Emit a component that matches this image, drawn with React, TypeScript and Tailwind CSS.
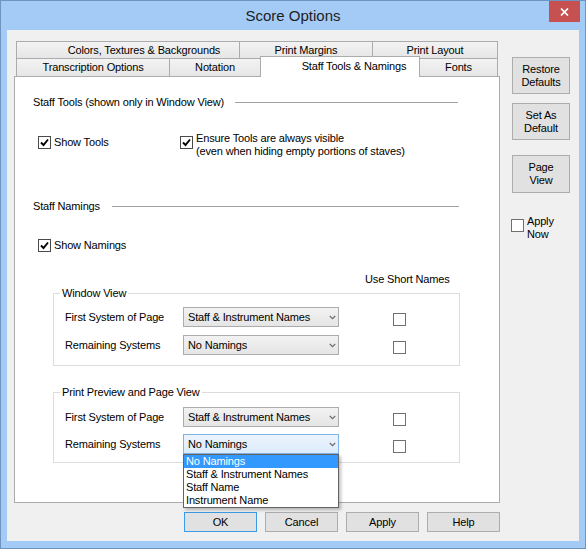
import React from "react";

function Box({ checked }: { checked?: boolean }) {
  return (
    <span
      className={`flex h-[13px] w-[13px] shrink-0 items-center justify-center border bg-white ${
        checked ? "border-[#4a4a4a]" : "border-[#707070]"
      }`}
    >
      {checked && (
        <svg width="9" height="9" viewBox="0 0 9 9">
          <path d="M1 4.5 L3.5 7 L8 1.5" fill="none" stroke="#000" strokeWidth="1.9" />
        </svg>
      )}
    </span>
  );
}

function Chevron() {
  return (
    <svg width="7" height="5" viewBox="0 0 7 5" className="mr-[2px] shrink-0">
      <path d="M0.8 1 L3.5 3.7 L6.2 1" fill="none" stroke="#707070" strokeWidth="1.3" />
    </svg>
  );
}

const options = ["No Namings", "Staff & Instrument Names", "Staff Name", "Instrument Name"];

function Select({ value, open }: { value: string; open?: boolean }) {
  return (
    <div
      className={`relative flex h-[20px] w-[156px] shrink-0 items-center border pl-[4px] ${
        open
          ? "border-[#7eb4ea] bg-linear-to-b from-[#ecf4fc] to-[#dcecfc]"
          : "border-[#acacac] bg-linear-to-b from-[#f2f2f2] to-[#e5e5e5]"
      }`}
    >
      <span className="flex-1 leading-[13px]">{value}</span>
      <Chevron />
      {open && (
        <div className="absolute left-[-1px] top-[19px] z-20 w-[156px] border border-[#646464] bg-white shadow-[2px_2px_3px_rgba(0,0,0,0.25)]">
          {options.map((o, i) => (
            <div
              key={o}
              className={`h-[13px] pl-[2px] leading-[13px] ${i === 0 ? "bg-[#3399ff] text-white" : ""}`}
            >
              {o}
            </div>
          ))}
        </div>
      )}
    </div>
  );
}

function Row({ label, value, open, className = "" }: { label: string; value: string; open?: boolean; className?: string }) {
  return (
    <div className={`flex h-[20px] items-center pl-[11px] ${className}`}>
      <span className="w-[118px] leading-[13px]">{label}</span>
      <Select value={value} open={open} />
      <span className="ml-[54px] mt-[4px]">
        <Box />
      </span>
    </div>
  );
}

function Group({ title, children, className = "" }: { title: string; children: React.ReactNode; className?: string }) {
  return (
    <fieldset className={`ml-[38px] w-[407px] border border-[#dcdcdc] ${className}`}>
      <legend className="ml-[6px] px-[2px] leading-[13px]">{title}</legend>
      {children}
    </fieldset>
  );
}

function Btn({ children, className = "" }: { children: React.ReactNode; className?: string }) {
  return (
    <div
      className={`flex items-center justify-center border bg-[#e1e1e1] text-center leading-[13px] ${
        className.includes("border-[") ? "" : "border-[#adadad]"
      } ${className}`}
    >
      {children}
    </div>
  );
}

const tab = "flex h-full items-center justify-center border-t border-[#acacac] bg-linear-to-b from-[#f3f3f3] to-[#e6e6e6]";

export default function App() {
  return (
    <div className="flex h-[549px] w-[586px] flex-col border border-[#6f94c2] bg-[#a3cbf6] font-['Liberation_Sans',Arial,sans-serif] text-[11px] tracking-[-0.15px] text-black select-none">
      {/* title bar */}
      <div className="flex h-[29px] shrink-0 items-start">
        <div className="flex-1 pl-[36px] pt-[6px] text-center text-[15px] leading-[18px] tracking-normal text-[#1e1e1e]">
          Score Options
        </div>
        <div className="mr-[5px] flex h-[21px] w-[31px] items-center justify-center bg-[#c75050]">
          <svg width="9" height="8" viewBox="0 0 9 8">
            <path d="M1 0.5 L8 7.5 M8 0.5 L1 7.5" stroke="#fff" strokeWidth="1.7" />
          </svg>
        </div>
      </div>

      {/* client area */}
      <div className="mx-[6px] mb-[7px] flex flex-1 items-start bg-[#f0f0f0]">
        <div className="ml-[7px] mt-[11px] flex w-[486px] flex-col">
          {/* tabs */}
          <div className="relative z-10 flex flex-col pl-[2px]">
            <div className="flex h-[17px]">
              <div className={`${tab} w-[223px] border-l pl-[32px]`}>Colors, Textures &amp; Backgrounds</div>
              <div className={`${tab} w-[133px] border-l`}>Print Margins</div>
              <div className={`${tab} w-[126px] border-l border-r`}>Print Layout</div>
            </div>
            <div className="flex h-[18px] items-end">
              <div className={`${tab} w-[153px] border-l`}>Transcription Options</div>
              <div className={`${tab} w-[91px] border-l`}>Notation</div>
              <div className="-mb-px flex h-[21px] w-[160px] items-center justify-center border-l border-r border-t border-[#acacac] bg-white pb-[2px] pl-[28px]">
                Staff Tools &amp; Namings
              </div>
              <div className={`${tab} w-[78px] border-r`}>Fonts</div>
            </div>
          </div>

          {/* panel */}
          <div className="flex h-[427px] flex-col border border-[#acacac] bg-white">
            <div className="mt-[19px] flex h-[13px] items-center pl-[18px]">
              <span className="leading-[13px]">Staff Tools (shown only in Window View)</span>
              <div className="ml-[11px] mr-[41px] h-px flex-1 bg-[#a0a0a0]" />
            </div>

            <div className="mt-[27px] flex h-[13px] items-start">
              <div className="ml-[23px] flex w-[142px] items-center">
                <Box checked />
                <span className="ml-[3px] leading-[13px]">Show Tools</span>
              </div>
              <div className="flex items-start">
                <Box checked />
                <span className="-mt-[4px] ml-[3px] leading-[13px]">
                  Ensure Tools are always visible
                  <br />
                  (even when hiding empty portions of staves)
                </span>
              </div>
            </div>

            <div className="mt-[51px] flex h-[13px] items-center pl-[18px]">
              <span className="leading-[13px]">Staff Namings</span>
              <div className="ml-[12px] mr-[40px] h-px flex-1 bg-[#a0a0a0]" />
            </div>

            <div className="ml-[23px] mt-[26px] flex h-[13px] items-center">
              <Box checked />
              <span className="ml-[3px] leading-[13px]">Show Namings</span>
            </div>

            <div className="mt-[21px] h-[13px] pl-[350px] leading-[13px]">Use Short Names</div>

            <Group title="Window View" className="mt-[1px] pb-[10px]">
              <Row label="First System of Page" value="Staff & Instrument Names" className="mt-[7px]" />
              <Row label="Remaining Systems" value="No Namings" className="mt-[8px]" />
            </Group>

            <Group title="Print Preview and Page View" className="mt-[20px] pb-[8px]">
              <Row label="First System of Page" value="Staff & Instrument Names" className="mt-[8px]" />
              <Row label="Remaining Systems" value="No Namings" open className="mt-[7px]" />
            </Group>
          </div>

          {/* dialog buttons */}
          <div className="mt-[9px] flex justify-end gap-[8px]">
            <Btn className="h-[20px] w-[73px] border-[#3c9be6]">OK</Btn>
            <Btn className="h-[20px] w-[73px]">Cancel</Btn>
            <Btn className="h-[20px] w-[73px]">Apply</Btn>
            <Btn className="h-[20px] w-[73px]">Help</Btn>
          </div>
        </div>

        {/* right column */}
        <div className="ml-[12px] mt-[27px] flex w-[58px] flex-col">
          <Btn className="h-[37px]">
            Restore
            <br />
            Defaults
          </Btn>
          <Btn className="mt-[9px] h-[37px]">
            Set As
            <br />
            Default
          </Btn>
          <Btn className="mt-[15px] h-[38px]">
            Page
            <br />
            View
          </Btn>
          <div className="-ml-px mt-[26px] flex items-start">
            <Box />
            <span className="-mt-[4px] ml-[3px] leading-[13px]">
              Apply
              <br />
              Now
            </span>
          </div>
        </div>
      </div>
    </div>
  );
}
